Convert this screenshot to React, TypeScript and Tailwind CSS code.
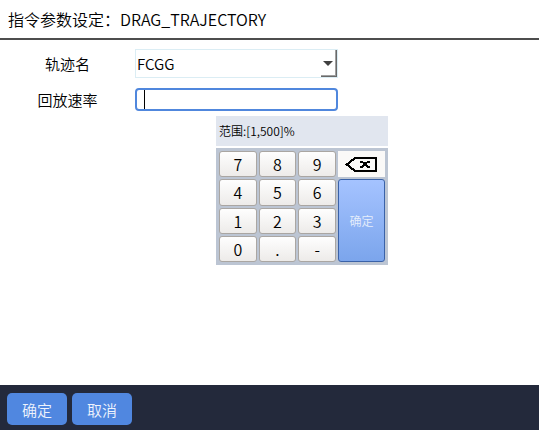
import React, { useState } from 'react';

const App = () => {
  const [rate, setRate] = useState('');
  const [track, setTrack] = useState('FCGG');

  const keys = ['7', '8', '9', '4', '5', '6', '1', '2', '3', '0', '.', '-'];

  return (
    <div className="min-h-screen flex flex-col bg-white text-black font-['Noto_Sans_CJK_SC',sans-serif] font-[350]">
      {/* Title */}
      <header className="h-10 px-2 flex items-center border-b-2 border-[#4d4d4d]">
        <h1 className="text-base font-[350]">指令参数设定：DRAG_TRAJECTORY</h1>
      </header>

      <main className="flex-1 pt-[9px]">
        {/* Parameters */}
        <div className="grid grid-cols-[135px_203px] items-center gap-y-[10px] text-[15px]">
          <label htmlFor="track" className="text-center leading-[23px]">轨迹名</label>
          <div className="relative">
            <select
              id="track"
              value={track}
              onChange={(e) => setTrack(e.target.value)}
              className="block w-full h-[29px] pl-px pt-px appearance-none bg-white border border-[#dbedf4] outline-none"
            >
              <option value="FCGG">FCGG</option>
            </select>
            <span className="absolute right-px top-px bottom-px w-4 border-r border-b border-[#696969] pointer-events-none">
              <span className="flex h-full items-center justify-center border-r border-b border-[#a0a0a0]">
                <svg width="10" height="7" viewBox="0 0 10 7" className="shrink-0" fill="#404040">
                  <path d="M0 2h10L5 7z" />
                </svg>
              </span>
            </span>
          </div>

          <label htmlFor="rate" className="text-center leading-[23px]">回放速率</label>
          <div className="relative">
            <input
              id="rate"
              type="text"
              value={rate}
              onChange={(e) => setRate(e.target.value)}
              className="block w-full h-[23px] px-[7px] bg-white border-2 border-[#5087dd] rounded outline-none caret-transparent"
            />
            {rate === '' && (
              <span className="absolute left-[9px] top-[2px] bottom-[2px] w-px bg-black pointer-events-none"></span>
            )}
          </div>
        </div>

        {/* Keypad */}
        <div className="ml-54 mt-[5px] w-43">
          <p className="h-[30px] px-[3px] bg-[#e1e6ef] text-xs leading-[30px]">范围:[1,500]%</p>
          <div className="mt-[2px] h-[117px] p-[3px] flex gap-[2px] bg-[#bcc5d3]">
            <div className="flex-1 grid grid-cols-3 grid-rows-4 gap-[2px]">
              {keys.map((key) => (
                <button
                  key={key}
                  type="button"
                  onClick={() => setRate(rate + key)}
                  className="min-h-0 flex items-center justify-center rounded-[3px] border border-[#aaa6a2] bg-linear-to-b from-[#fefefe] to-[#edebe9] text-base leading-none text-black"
                >
                  {key}
                </button>
              ))}
            </div>
            <div className="w-[47px] flex flex-col gap-[2px]">
              <button
                type="button"
                aria-label="退格"
                onClick={() => setRate(rate.slice(0, -1))}
                className="h-[26px] flex items-center justify-center bg-[#faf9f8]"
              >
                <svg width="33" height="16" viewBox="0 0 33 16" fill="none" stroke="#000" shapeRendering="crispEdges">
                  <path d="M10 2H31V15H10L2 8.5Z" strokeWidth="2.2" />
                  <path d="M15 5.5H17L23 11H25M25 5.5H23L17 11H15" strokeWidth="2" />
                </svg>
              </button>
              <button
                type="button"
                className="flex-1 rounded-[3px] border border-[#3a62a8] bg-linear-to-b from-[#a5c3ff] to-[#7ba5ec] text-xs text-[#e6eefb]"
              >
                确定
              </button>
            </div>
          </div>
        </div>
      </main>

      {/* Actions */}
      <footer className="h-[45px] px-[7px] pt-2 flex items-start gap-[5px] bg-[#23293b] text-[15px] text-[#eef3fc]">
        <button type="button" className="w-15 h-8 pt-[2px] rounded-[5px] bg-[#5087e0]">确定</button>
        <button type="button" className="w-15 h-8 pt-[2px] rounded-[5px] bg-[#5087e0]">取消</button>
      </footer>
    </div>
  );
};

export default App;
